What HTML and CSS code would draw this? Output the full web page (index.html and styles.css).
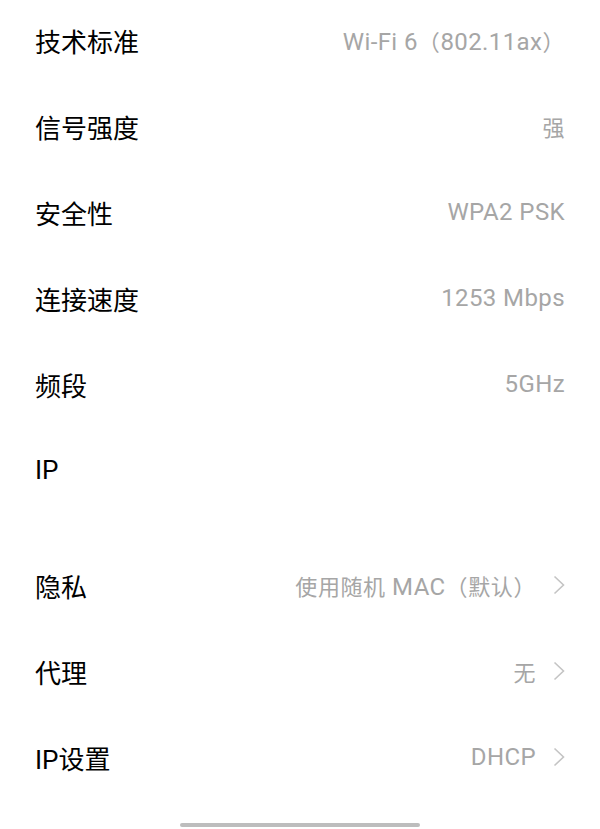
FILE: index.html
```html
<!DOCTYPE html>
<html lang="zh-CN">
<head>
    <meta charset="UTF-8">
    <title>WLAN 详情</title>
    <link rel="stylesheet" href="styles.css">
</head>
<body>
    <div class="page">
        <ul class="list">
            <li class="row"><span class="label">技术标准</span><span class="value">Wi-Fi 6<span class="cjk">（</span>802.11ax<span class="cjk">）</span></span></li>
            <li class="row"><span class="label">信号强度</span><span class="value"><span class="cjk">强</span></span></li>
            <li class="row"><span class="label">安全性</span><span class="value">WPA2 PSK</span></li>
            <li class="row"><span class="label">连接速度</span><span class="value">1253 Mbps</span></li>
            <li class="row"><span class="label">频段</span><span class="value">5GHz</span></li>
            <li class="row"><span class="label">IP</span><span class="value"></span></li>
        </ul>
        <ul class="list list-settings">
            <li class="row link"><span class="label">隐私</span><span class="value"><span class="cjk">使用随机</span> MAC<span class="cjk">（默认）</span></span><svg class="chevron" viewBox="0 0 12 20"><path d="M1.5 1.5 L10.5 10 L1.5 18.5"/></svg></li>
            <li class="row link"><span class="label">代理</span><span class="value"><span class="cjk">无</span></span><svg class="chevron" viewBox="0 0 12 20"><path d="M1.5 1.5 L10.5 10 L1.5 18.5"/></svg></li>
            <li class="row link"><span class="label">IP设置</span><span class="value">DHCP</span><svg class="chevron" viewBox="0 0 12 20"><path d="M1.5 1.5 L10.5 10 L1.5 18.5"/></svg></li>
        </ul>
        <div class="home-bar"></div>
    </div>
</body>
</html>
```

FILE: styles.css
```css
body {
    margin: 0;
    padding: 0;
    background-color: #ffffff;
    font-family: Roboto, "Noto Sans CJK SC", sans-serif;
}
.page {
    width: 600px;
    height: 829px;
    position: relative;
    overflow: hidden;
}
.list {
    list-style: none;
    margin: 0;
    padding: 0 35px;
}
.list:first-child {
    margin-top: -3px;
}
.list-settings {
    margin-top: 29px;
}
.row {
    display: flex;
    align-items: center;
    height: 86px;
}
.label {
    flex: 1;
    font-size: 26px;
    color: #000000;
}
.value {
    font-size: 24px;
    letter-spacing: 0.4px;
    color: #a6a6a6;
}
.value .cjk {
    font-size: 22px;
    letter-spacing: 0.6px;
}
.chevron {
    width: 12px;
    height: 20px;
    margin-left: 17px;
    fill: none;
    stroke: #c4c4c4;
    stroke-width: 1.6;
}
.home-bar {
    position: absolute;
    left: 180px;
    bottom: 2px;
    width: 240px;
    height: 4px;
    border-radius: 2px;
    background-color: #bdbdbd;
}
```
